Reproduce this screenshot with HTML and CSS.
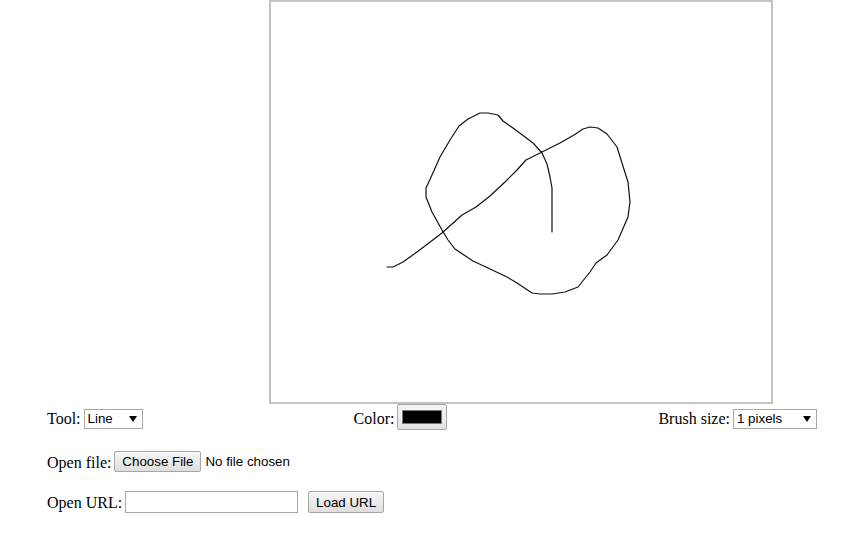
FILE: index.html
```html
<!DOCTYPE html>
<html lang="en">
<head>
<meta charset="utf-8">
<title>Paint</title>
<link rel="stylesheet" href="styles.css">
</head>
<body>
<div class="app">
  <div class="canvas-frame">
    <svg class="canvas" width="500" height="400" viewBox="0 0 500 400">
      <polyline fill="none" stroke="#111" stroke-width="1.2" stroke-linejoin="round" stroke-linecap="round"
        points="116,265 122,265 132,260 146,250 171,231 191,213 205,205 219,194 234,180 246,168 255,158 269,151 289,141 303,133 312,127 319,125 327,126 336,132 346,145 351,161 357,180 359,200 357,215 347,238 336,253 325,261 319,270 307,285 294,290 281,292 269,292 261,291 246,281 236,275 217,266 202,259 184,247 177,238 171,228 161,210 155,195 155,186 161,173 169,155 179,138 188,124 197,117 209,111 217,111 227,113 232,119 242,126 262,141 271,151 276,162 279,175 281,186 281,208 281,230"/>
    </svg>
  </div>
  <div class="toolbar">
    <label class="group">Tool: <select class="select select-tool"><option>Line</option><option>Pencil</option><option>Rectangle</option></select></label>
    <label class="group">Color: <input class="color" type="color" value="#000000"></label>
    <label class="group">Brush size: <select class="select select-size"><option>1 pixels</option><option>2 pixels</option><option>5 pixels</option></select></label>
  </div>
  <div class="row row-file">
    <span class="label">Open file:</span>
    <button class="btn btn-file" type="button">Choose File</button>
    <span class="file-status">No file chosen</span>
  </div>
  <div class="row row-url">
    <span class="label">Open URL:</span>
    <input class="text-input" type="text">
    <button class="btn btn-load" type="button">Load URL</button>
  </div>
</div>
</body>
</html>
```

FILE: styles.css
```css
html, body {
  margin: 0;
  padding: 0;
  background: #fff;
}

body {
  font-family: "Liberation Serif", "Times New Roman", serif;
  font-size: 16px;
  color: #000;
}

.app {
  width: 770px;
  padding-left: 47px;
}

.canvas-frame {
  width: 500px;
  height: 400px;
  margin-left: 222px;
  border: 2px solid #c3c3c3;
  background: #fff;
}

.canvas {
  display: block;
}

.toolbar {
  display: flex;
  justify-content: space-between;
  align-items: center;
  height: 26px;
  margin-top: 1px;
}

.group {
  display: flex;
  align-items: center;
  gap: 3px;
  position: relative;
  top: 1px;
}

.select {
  appearance: none;
  -webkit-appearance: none;
  box-sizing: border-box;
  height: 20px;
  margin: 0;
  padding: 0 0 0 3px;
  border: 1px solid #a9a9a9;
  border-radius: 0;
  background: #fff url("data:image/svg+xml;utf8,<svg xmlns='http://www.w3.org/2000/svg' width='8' height='6'><path d='M0 0h8L4 6z' fill='%23000'/></svg>") no-repeat;
  font-family: "Liberation Sans", Arial, sans-serif;
  font-size: 13.33px;
  color: #000;
  line-height: 18px;
}

.select-tool {
  width: 59px;
  background-position: 44px 6px;
}

.select-size {
  width: 84px;
  background-position: 69px 6px;
}

.color {
  appearance: none;
  -webkit-appearance: none;
  box-sizing: border-box;
  width: 50px;
  height: 26px;
  margin: 0;
  padding: 5px 4px;
  border: 1px solid #a6a6a6;
  border-radius: 2px;
  background: linear-gradient(#f5f5f5, #e3e3e3);
  position: relative;
  top: -2px;
}

.color::-webkit-color-swatch-wrapper {
  padding: 0;
}

.color::-webkit-color-swatch {
  border: 1px solid #777;
  border-radius: 0;
}

.row {
  display: flex;
  align-items: center;
}

.row-file {
  margin-top: 20px;
  height: 21px;
}

.row-url {
  margin-top: 19px;
  height: 22px;
}

.label {
  margin-right: 3px;
  position: relative;
  top: 1px;
}

.btn {
  box-sizing: border-box;
  margin: 0;
  padding: 0 6px;
  border: 1px solid #a6a6a6;
  border-radius: 2px;
  background: linear-gradient(#f7f7f7, #dedede);
  font-family: "Liberation Sans", Arial, sans-serif;
  font-size: 13.33px;
  color: #000;
}

.btn-file {
  width: 87px;
  height: 21px;
}

.file-status {
  margin-left: 4px;
  font-family: "Liberation Sans", Arial, sans-serif;
  font-size: 13.33px;
}

.text-input {
  box-sizing: border-box;
  width: 173px;
  height: 22px;
  margin: 0;
  padding: 1px 2px;
  border: 1px solid #a9a9a9;
  border-radius: 0;
  background: #fff;
  font-family: "Liberation Sans", Arial, sans-serif;
  font-size: 13.33px;
}

.btn-load {
  width: 76px;
  height: 22px;
  margin-left: 10px;
}
```
